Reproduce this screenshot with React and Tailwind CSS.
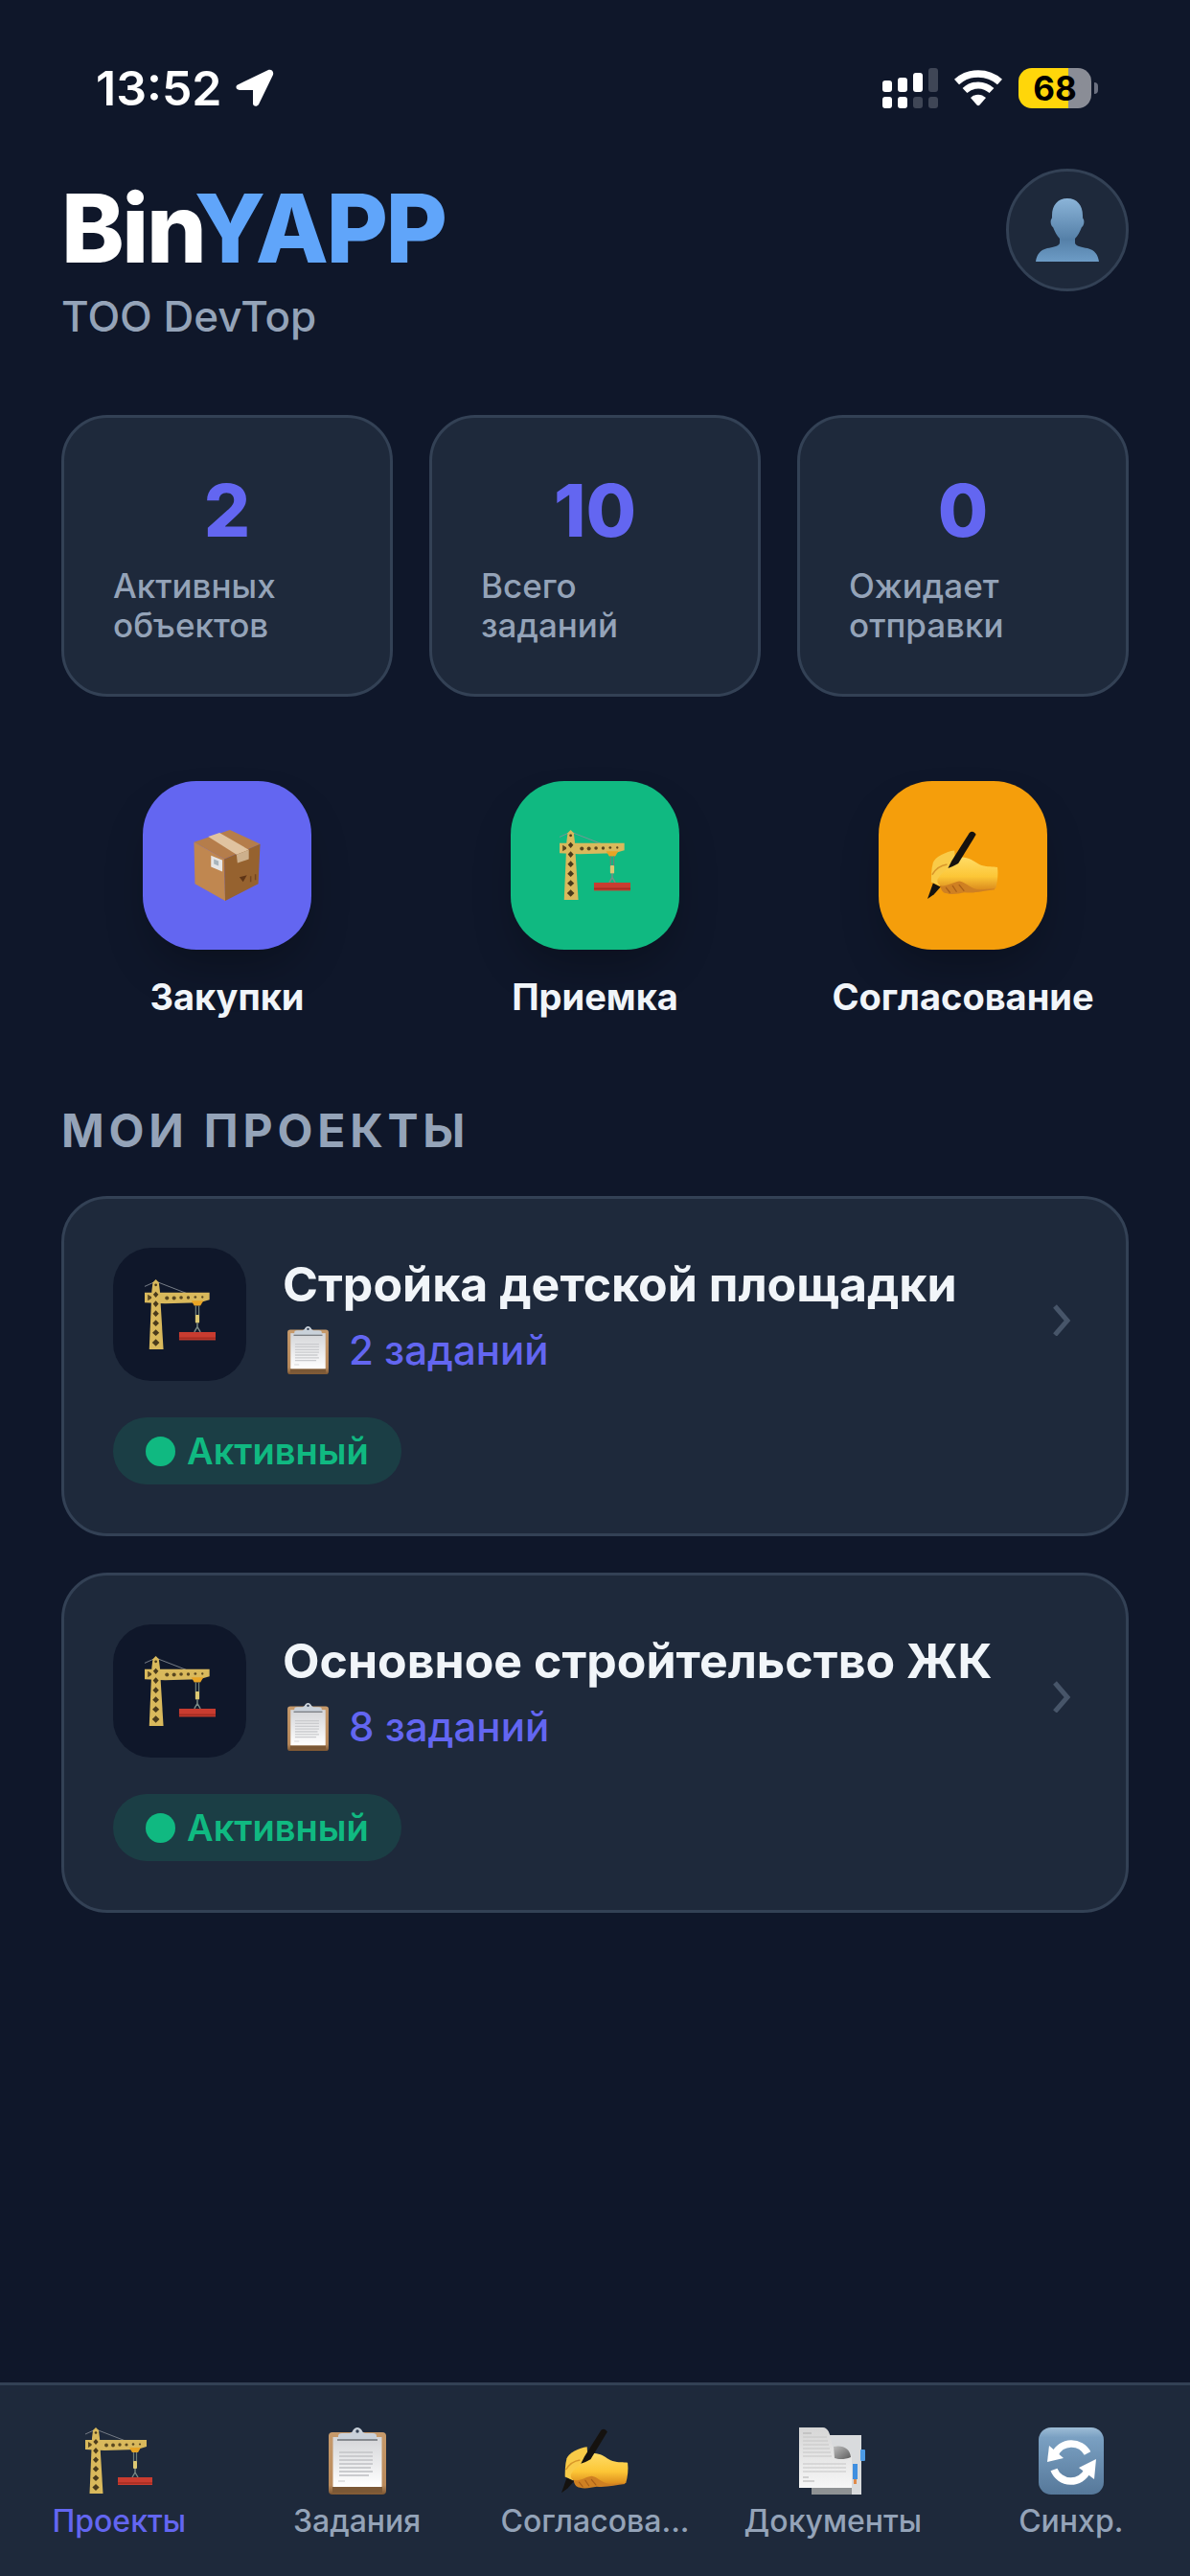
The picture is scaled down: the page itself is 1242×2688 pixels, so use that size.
const CraneIcon = ({ className }) => (
    <svg viewBox="0 0 70 70" className={className} aria-hidden="true">
        <path d="M0 7 L11 2 L42 14" fill="none" stroke="#8a8f98" strokeWidth="0.8" />
        {/* jib */}
        <path d="M0 13 H64 V20 L54 23 L20 24 L0 23 Z" fill="#d9b95c" />
        <g fill="#5a4820">
            <path d="M3 15 l5 3 l-5 3 z" />
            <circle cx="22" cy="18.5" r="1.9" />
            <circle cx="29" cy="18.5" r="1.9" />
            <circle cx="36" cy="18" r="1.7" />
            <circle cx="43" cy="18" r="1.6" />
            <circle cx="50" cy="17.5" r="1.3" />
            <circle cx="57" cy="17.5" r="1.1" />
        </g>
        {/* mast */}
        <path d="M8 3 L11 0 L14 3 L15 11 L18.5 69 H4.5 L7 11 Z" fill="#d9b95c" />
        <circle cx="11" cy="5.5" r="1.3" fill="#4a3a1c" />
        <g fill="#4a3b1c">
            <path d="M11 12 l2.6 3 l-2.6 3 l-2.6 -3 z" />
            <path d="M11 21 l2.8 3.2 l-2.8 3.2 l-2.8 -3.2 z" />
            <path d="M11 30.5 l3 3.2 l-3 3.2 l-3 -3.2 z" />
            <path d="M11 40 l3.2 3.2 l-3.2 3.2 l-3.2 -3.2 z" />
            <path d="M11 49.5 l3.4 3.2 l-3.4 3.2 l-3.4 -3.2 z" />
            <path d="M11 59 l3.6 3.5 l-3.6 3.5 l-3.6 -3.5 z" />
        </g>
        {/* trolley, cable and load */}
        <path d="M46 21 H58 L55 26 H49 Z" fill="#e8a425" />
        <path d="M50.5 26 V36 M53.5 26 V36" stroke="#6f7f78" strokeWidth="1.2" />
        <rect x="50" y="35" width="4" height="8" rx="1" fill="#dcc873" />
        <path d="M52 43 V47 M52 47 L49 52 M52 47 L55 52" fill="none" stroke="#7b8a86" strokeWidth="1.4" />
        <rect x="34" y="52" width="36" height="8" fill="#c93c30" />
        <path d="M34 58 H70" stroke="#a52c22" strokeWidth="1.6" />
    </svg>
)

const ClipboardIcon = ({ className }) => (
    <svg viewBox="0 0 60 70" className={className} aria-hidden="true">
        <defs>
            <linearGradient id="boardFill" x1="0" y1="0" x2="0" y2="1">
                <stop offset="0" stopColor="#c79a6b" />
                <stop offset="0.85" stopColor="#b98a5c" />
                <stop offset="1" stopColor="#7c5632" />
            </linearGradient>
            <linearGradient id="sheetFill" x1="0" y1="0" x2="0" y2="1">
                <stop offset="0" stopColor="#d4d5d8" />
                <stop offset="1" stopColor="#ffffff" />
            </linearGradient>
        </defs>
        <rect x="0" y="5" width="60" height="65" rx="4" fill="url(#boardFill)" />
        <rect x="4" y="62" width="52" height="6" fill="#7b5836" />
        <rect x="4.5" y="10" width="51" height="52" fill="url(#sheetFill)" />
        <path d="M11 26 H46 M11 30 H46 M11 34 H46 M11 38 H46 M11 42 H44 M11 46 H46 M11 50 H42" stroke="#cacbce" strokeWidth="1.8" />
        <path d="M10 56 h7" stroke="#c9cacc" strokeWidth="1" />
        <path d="M10 13 V9 Q10 6 14 6 H22 Q25 5 26 2 Q30 -2 34 2 Q35 5 38 6 H46 Q50 6 50 9 V13 Z" fill="#c9d1da" />
        <path d="M9 13 H51" stroke="#6e7277" strokeWidth="1.6" />
        <circle cx="30" cy="4" r="1.7" fill="#334155" />
    </svg>
)

const WritingHandIcon = ({ className }) => (
    <svg viewBox="0 0 76 72" className={className} aria-hidden="true">
        <defs>
            <linearGradient id="handFill" x1="0" y1="0" x2="0" y2="1">
                <stop offset="0" stopColor="#ffdc66" />
                <stop offset="0.6" stopColor="#fcc636" />
                <stop offset="1" stopColor="#dc8d1e" />
            </linearGradient>
        </defs>
        <path d="M29 20 C20 21 8 27 6 33 C4 40 4 48 4 54 L13 58 L30 36 Z" fill="#f9cb48" />
        <path d="M13 54 C14 62 16 66 21 66 C26 68 34 66 40 65 C52 66 62 63 72 62 L70 48 L40 44 Z" fill="#cf8022" />
        <path
            d="M24 36 C29 28 36 26 42 28 C48 29 52 34 58 36 C65 38 70 37 75 38 C76 46 75 54 73 61 C64 61 57 63 50 61 C42 57 38 53 34 53 C28 54 22 58 16 58 C11 58 9 52 12 49 C15 44 20 42 24 36 Z"
            fill="url(#handFill)"
        />
        <path d="M5 46 C8 41 14 36 21 35" fill="none" stroke="#d9972a" strokeWidth="1.6" />
        <path d="M20 60 l4 5 M27 58 l4 6 M34 57 l5 6" stroke="#a95f18" strokeWidth="1.3" strokeLinecap="round" />
        <path d="M45 1 Q49 -2 52 3 L33 34 Q28 37 22 39 L26 31 Z" fill="#15120f" />
        <path d="M6 55 L14 59 L7 67 L0 72 Z" fill="#15120f" />
    </svg>
)

const PackageIcon = ({ className }) => (
    <svg viewBox="0 0 70 75" className={className} aria-hidden="true">
        <path d="M38 0 L70 15 L32 31 L0 13 Z" fill="#b57d4b" />
        <path d="M0 13 L32 31 L33 75 L1 57 Z" fill="#c08750" />
        <path d="M32 31 L70 15 L68 57 L33 75 Z" fill="#96622f" />
        <path d="M15 7 L27 3 L58 21 L45 26 Z" fill="#e0c3a0" />
        <path d="M45 26 L58 21 V31 L46 35 Z" fill="#cdb08c" />
        <path d="M18 27 L30 32 V44 L18 39 Z" fill="#e6e6e6" />
        <path d="M21 31 L26 33 V38 L21 36 Z" fill="#a8b4bb" />
        <path d="M48 50 L56 48 L52 55 Z" fill="#5f3516" />
        <path d="M60 49 V55 M65 47 V53" stroke="#744620" strokeWidth="1.5" />
    </svg>
)

const DocumentsIcon = ({ className }) => (
    <svg viewBox="0 0 70 70" className={className} aria-hidden="true">
        <defs>
            <linearGradient id="pageFill" x1="0" y1="0" x2="0" y2="1">
                <stop offset="0" stopColor="#d6d6d6" />
                <stop offset="1" stopColor="#f6f6f6" />
            </linearGradient>
            <linearGradient id="curlFill" x1="0" y1="0" x2="1" y2="1">
                <stop offset="0" stopColor="#bdbdbd" />
                <stop offset="1" stopColor="#5d5d5d" />
            </linearGradient>
        </defs>
        <rect x="13" y="8" width="52" height="62" fill="#d9dbdd" />
        <rect x="13" y="63" width="42" height="7" fill="#8f9294" />
        <rect x="64" y="23" width="5" height="12" rx="1" fill="#4d9be6" />
        <rect x="56" y="38" width="5" height="16" fill="#3f8fe0" />
        <rect x="57" y="54" width="3" height="5" fill="#e08a4a" />
        <path d="M0 0 H25 C34 1 32 15 36 21 C44 19 54 22 55 32 V63 H0 Z" fill="url(#pageFill)" />
        <path d="M36 20 C46 18 53 22 54 31 C47 34 40 33 37 32 Z" fill="url(#curlFill)" />
        <path d="M4 10 H29 M4 14 H30 M4 18 H31 M4 22 H32 M4 26 H33 M4 30 H34 M4 38 H49 M4 42 H49 M4 46 H49" stroke="#c6c6c6" strokeWidth="1.1" />
        <path d="M4 6 H13 M4 52 H10 M4 56 H16" stroke="#b0b0b0" strokeWidth="1.1" />
    </svg>
)

const SyncIcon = ({ className }) => (
    <svg viewBox="0 0 68 70" className={className} aria-hidden="true">
        <defs>
            <linearGradient id="syncFill" x1="0" y1="0" x2="0" y2="1">
                <stop offset="0" stopColor="#9dbcd6" />
                <stop offset="0.15" stopColor="#7aa0c2" />
                <stop offset="1" stopColor="#56789a" />
            </linearGradient>
        </defs>
        <rect width="68" height="70" rx="13" fill="url(#syncFill)" />
        <path d="M51 27 A19 19 0 0 0 17 28" fill="none" stroke="#fff" strokeWidth="7.5" />
        <path d="M9 36 L11 19 L26 32 Z" fill="#fff" />
        <path d="M16 44 A19 19 0 0 0 51 45" fill="none" stroke="#fff" strokeWidth="7.5" />
        <path d="M60 33 L42 42 L58 54 Z" fill="#fff" />
    </svg>
)

const PersonIcon = ({ className }) => (
    <svg viewBox="0 0 66 66" className={className} aria-hidden="true">
        <defs>
            <linearGradient id="personFill" x1="0" y1="0" x2="0" y2="1">
                <stop offset="0" stopColor="#8bb4d8" />
                <stop offset="0.65" stopColor="#5580a8" />
                <stop offset="1" stopColor="#6d9cc6" />
            </linearGradient>
        </defs>
        <path
            d="M33 0 C43 0 49 7 49 18 C49 20 49 21 50 22 C51 25 50 29 48 30 C46 35 44 39 41 42 V46 C41 50 48 51 54 52 C62 54 65 59 66 66 H0 C1 59 4 54 12 52 C18 51 25 50 25 46 V42 C22 39 20 35 18 30 C16 29 15 25 16 22 C17 21 17 20 17 18 C17 7 23 0 33 0 Z"
            fill="url(#personFill)"
        />
    </svg>
)

const LocationIcon = () => (
    <svg viewBox="0 0 40 40" className="size-10" fill="#fff" aria-hidden="true">
        <path d="M34 1 C37 0 40 2 39 6 L24 37 C22 40 18 39 18 36 L18 22 L4 22 C0 22 -1 17 3 16 Z" />
    </svg>
)

const SignalIcon = () => (
    <svg viewBox="0 0 58 42" className="h-[42px] w-[58px]" aria-hidden="true">
        <g fill="#fff">
            <rect x="0" y="13" width="10" height="12" rx="3" />
            <rect x="16" y="10" width="10" height="15" rx="3" />
            <rect x="32" y="5" width="10" height="20" rx="3" />
            <rect x="0" y="30" width="10" height="12" rx="3" />
            <rect x="16" y="30" width="10" height="12" rx="3" />
        </g>
        <g fill="#3f4656">
            <rect x="48" y="0" width="10" height="25" rx="3" />
            <rect x="32" y="30" width="10" height="12" rx="3" />
            <rect x="48" y="30" width="10" height="12" rx="3" />
        </g>
    </svg>
)

const WifiIcon = () => (
    <svg viewBox="0 0 50 38" className="h-[38px] w-[50px]" aria-hidden="true">
        <path d="M2.5 12.5 C15 1 35 1 47.5 12.5" fill="none" stroke="#fff" strokeWidth="7.5" />
        <path d="M11 21.5 C19 14 31 14 39 21.5" fill="none" stroke="#fff" strokeWidth="7" />
        <path d="M17 29 C22 24.5 28 24.5 33 29 L26.5 36.5 Q25 38 23.5 36.5 Z" fill="#fff" />
    </svg>
)

const ChevronIcon = () => (
    <svg viewBox="0 0 32 44" className="h-11 w-8 shrink-0" aria-hidden="true">
        <path d="M9 13 L22 28 L9 43" fill="none" stroke="#475569" strokeWidth="5" />
    </svg>
)

const stats = [
    { value: 2, label: ['Активных', 'объектов'] },
    { value: 10, label: ['Всего', 'заданий'] },
    { value: 0, label: ['Ожидает', 'отправки'] },
]

const actions = [
    { label: 'Закупки', icon: PackageIcon, color: 'bg-[#6366f1]' },
    { label: 'Приемка', icon: CraneIcon, color: 'bg-[#10b981]' },
    { label: 'Согласование', icon: WritingHandIcon, color: 'bg-[#f59e0b]' },
]

const projects = [
    { id: 1, title: 'Стройка детской площадки', tasks: 2 },
    { id: 2, title: 'Основное стройтельство ЖК', tasks: 8 },
]

const tabs = [
    { label: 'Проекты', icon: CraneIcon, active: true },
    { label: 'Задания', icon: ClipboardIcon },
    { label: 'Согласова...', icon: WritingHandIcon },
    { label: 'Документы', icon: DocumentsIcon },
    { label: 'Синхр.', icon: SyncIcon },
]

const StatusBar = () => (
    <div className="flex items-center justify-between pt-[60px] pr-24 pl-[100px]">
        <div className="flex items-center gap-[14px]">
            <span className="text-[50px] leading-[64px] font-semibold text-white">13:52</span>
            <LocationIcon />
        </div>
        <div className="flex items-center gap-[17px]">
            <SignalIcon />
            <WifiIcon />
            <div className="flex items-center gap-[3px]">
                <div className="flex h-[42px] w-[76px] items-center justify-center rounded-[14px] bg-linear-to-r from-[#ffd60a] from-68% to-[#8a8d96] to-68% text-[35px] leading-[42px] font-bold text-black">
                    68
                </div>
                <div className="h-3 w-1 rounded-r-full bg-[#6b7080]" />
            </div>
        </div>
    </div>
)

const ProjectCard = ({ title, tasks }) => (
    <a href="#project" className="block rounded-[48px] border-3 border-[#334155] bg-[#1e293b] p-[51px]">
        <div className="flex items-center gap-[38px]">
            <div className="flex size-[139px] shrink-0 items-center justify-center rounded-[40px] bg-[#0f172a]">
                <CraneIcon className="size-[74px]" />
            </div>
            <div className="flex min-w-0 flex-1 flex-col gap-[14px]">
                <h3 className="text-[50px] leading-[60px] font-bold text-[#f1f5f9]">{title}</h3>
                <p className="flex items-center gap-5 pl-1 text-[42px] leading-[50px] font-medium text-[#6366f1]">
                    <ClipboardIcon className="h-[50px] w-[45px]" />
                    {tasks} заданий
                </p>
            </div>
            <ChevronIcon />
        </div>
        <div className="mt-[38px] flex h-[70px] w-fit items-center gap-3 rounded-full bg-[#10b981]/15 px-[34px] text-[38px] font-semibold text-[#10b981]">
            <span className="size-[31px] rounded-full bg-[#10b981]" />
            Активный
        </div>
    </a>
)

export default function App() {
    return (
        <div className="flex min-h-screen flex-col bg-[#0f172a] font-['Inter','Liberation_Sans',sans-serif]">
            <StatusBar />

            <main className="flex flex-1 flex-col px-16 pt-[52px] pb-16">
                <header className="flex items-start justify-between">
                    <div>
                        <h1 className="text-[99px] leading-[124px] font-extrabold tracking-tight text-white">
                            Bin<span className="text-[#60a5fa]">YAPP</span>
                        </h1>
                        <p className="mt-1 text-[44px] leading-[52px] font-medium text-[#94a3b8]">TOO DevTop</p>
                    </div>
                    <button
                        type="button"
                        aria-label="Профиль"
                        className="flex size-32 items-center justify-center rounded-full border-3 border-[#334155] bg-[#1e293b]"
                    >
                        <PersonIcon className="size-[66px]" />
                    </button>
                </header>

                <section className="mt-[77px] grid grid-cols-3 gap-[38px]">
                    {stats.map(({ value, label }) => (
                        <div key={label[0]} className="rounded-[48px] border-3 border-[#334155] bg-[#1e293b] p-[51px]">
                            <p className="text-center text-[76px] leading-[90px] font-extrabold text-[#6366f1]">{value}</p>
                            <p className="mt-[14px] text-[35px] leading-[41px] font-medium text-[#94a3b8]">
                                {label[0]}
                                <br />
                                {label[1]}
                            </p>
                        </div>
                    ))}
                </section>

                <section className="mt-22 grid grid-cols-3 gap-[38px]">
                    {actions.map(({ label, icon: Icon, color }) => (
                        <button key={label} type="button" className="flex flex-col items-center gap-[26px]">
                            <span className={`flex size-44 items-center justify-center rounded-[56px] shadow-2xl shadow-black/30 ${color}`}>
                                <Icon className="size-[74px]" />
                            </span>
                            <span className="text-[38px] leading-[46px] font-bold text-[#f1f5f9]">{label}</span>
                        </button>
                    ))}
                </section>

                <h2 className="mt-[87px] text-[48px] leading-[60px] font-bold tracking-widest text-[#94a3b8]">МОИ ПРОЕКТЫ</h2>
                <div className="mt-[38px] flex flex-col gap-[38px]">
                    {projects.map((project) => (
                        <ProjectCard key={project.id} {...project} />
                    ))}
                </div>
            </main>

            <nav className="grid grid-cols-5 border-t-3 border-[#334155] bg-[#1e293b] pt-11 pb-[37px]">
                {tabs.map(({ label, icon: Icon, active }) => (
                    <button
                        key={label}
                        type="button"
                        className={`flex flex-col items-center gap-2 text-[32px] leading-[40px] font-medium ${active ? 'text-[#6366f1]' : 'text-[#94a3b8]'}`}
                    >
                        <Icon className="size-[70px]" />
                        {label}
                    </button>
                ))}
            </nav>
        </div>
    )
}
